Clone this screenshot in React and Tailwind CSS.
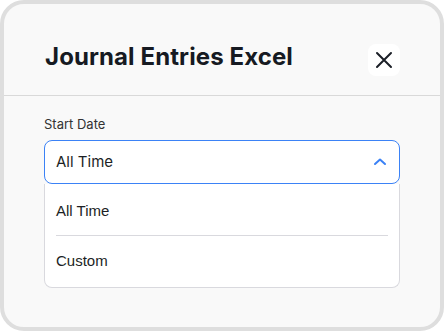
import React from "react";

export default function App() {
  return (
    <div className="w-[444px] h-[331px] bg-white">
      <div className="w-full h-full border-4 border-[#dedede] rounded-[24px] bg-[#f9f9f9] flex flex-col overflow-hidden">
        <div className="h-[92px] flex items-center justify-between pl-[41px] pr-[40px] pt-[15px] border-b border-[#d9d9d9] shrink-0">
          <h1 className="font-['Inter',sans-serif] font-bold text-[24px] leading-none text-[#161a22] tracking-[0.1px]">
            Journal Entries Excel
          </h1>
          <button className="w-[32px] h-[32px] rounded-[8px] bg-white flex items-center justify-center mt-[6px]">
            <svg width="18" height="18" viewBox="0 0 18 18" fill="none">
              <path d="M2 2L16 16M16 2L2 16" stroke="#1b1f27" strokeWidth="2" strokeLinecap="round" />
            </svg>
          </button>
        </div>
        <div className="px-[40px] pt-[20px]">
          <div className="font-['Inter',sans-serif] text-[13px] leading-[16px] text-[#333] mb-[8px]">Start Date</div>
          <div className="h-[44px] border border-[#3b82f6] rounded-[8px] bg-white flex items-center justify-between pl-[11px] pr-[12px]">
            <span className="font-['Inter',sans-serif] text-[15px] text-[#1c1f25]">All Time</span>
            <svg width="14" height="10" viewBox="0 0 14 10" fill="none">
              <path d="M2 7L7 2.5L12 7" stroke="#3b82f6" strokeWidth="2" strokeLinecap="round" strokeLinejoin="round" />
            </svg>
          </div>
          <div className="border border-t-0 border-[#d9d9de] rounded-b-[8px] bg-white px-[11px] h-[104px] flex flex-col">
            <div className="h-[52px] flex items-center border-b border-[#d9d9de] pt-[4px]">
              <span className="font-['Liberation_Sans',Arial,sans-serif] text-[15px] text-[#1c1f25]">All Time</span>
            </div>
            <div className="h-[51px] flex items-center">
              <span className="font-['Liberation_Sans',Arial,sans-serif] text-[15px] text-[#1c1f25]">Custom</span>
            </div>
          </div>
        </div>
      </div>
    </div>
  );
}
